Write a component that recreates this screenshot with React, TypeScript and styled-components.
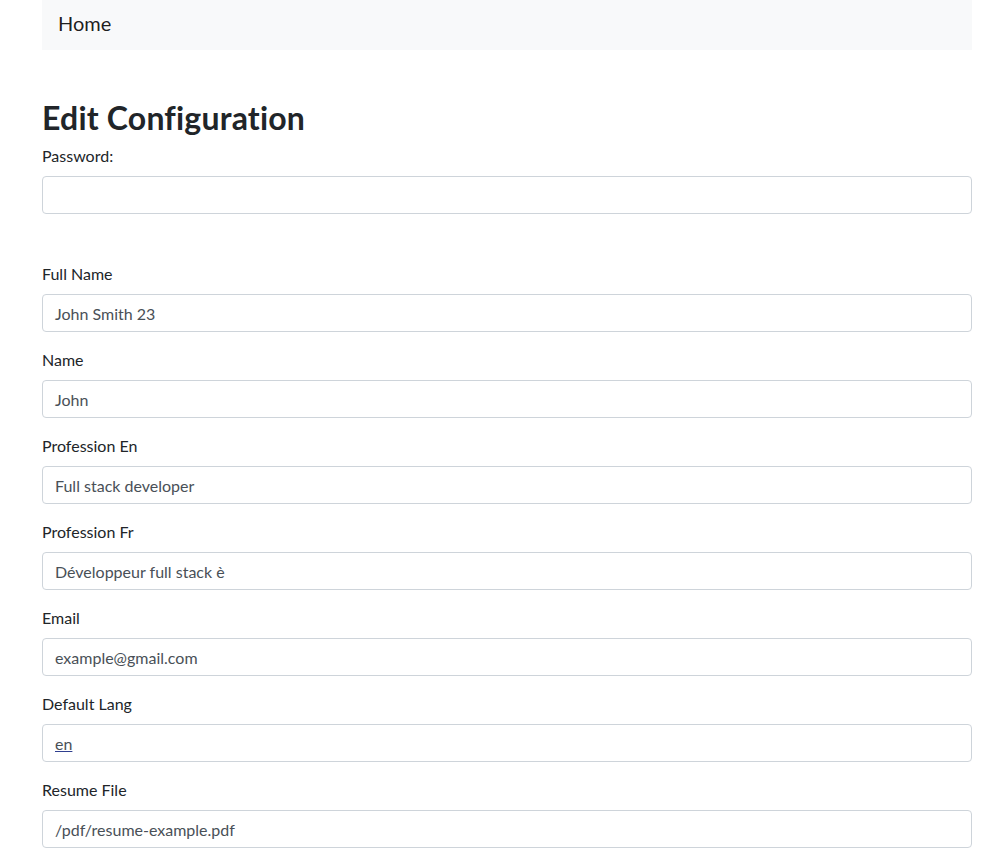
import React from 'react';
import styled, {createGlobalStyle} from 'styled-components';

const GlobalStyle = createGlobalStyle`
  body {
    margin: 0;
    background: #fff;
    color: #212529;
    font-family: "Segoe UI", Lato, "Liberation Sans", sans-serif;
    font-size: 16px;
    line-height: 1.5;
  }
  * {
    box-sizing: border-box;
  }
`;

const Container = styled.div`
  width: 930px;
  margin-left: 42px;
`;

const Navbar = styled.nav`
  display: flex;
  align-items: center;
  height: 50px;
  padding: 0 16px 5px;
  background: #f8f9fa;
`;

const Brand = styled.a`
  font-size: 20px;
  color: rgba(0, 0, 0, 0.9);
  text-decoration: none;
`;

const Title = styled.h2`
  margin: 48px 0 8px;
  padding-top: 1px;
  height: 38px;
  font-size: 32px;
  font-weight: 700;
  line-height: 1.2;
  letter-spacing: 0.2px;
`;

const Group = styled.div<{$spaced?: boolean}>`
  margin-bottom: ${p => (p.$spaced ? '48px' : '16px')};
`;

const Label = styled.label`
  display: block;
  margin-bottom: 8px;
`;

const Input = styled.div<{$link?: boolean}>`
  height: 38px;
  padding: 7px 12px 5px;
  border: 1px solid #ced4da;
  border-radius: 4px;
  color: #495057;
  line-height: 24px;

  span {
    text-decoration: ${p => (p.$link ? 'underline' : 'none')};
    text-decoration-color: #2f3f8f;
  }
`;

const fields = [
  {label: 'Full Name', value: 'John Smith 23'},
  {label: 'Name', value: 'John'},
  {label: 'Profession En', value: 'Full stack developer'},
  {label: 'Profession Fr', value: 'Développeur full stack è'},
  {label: 'Email', value: 'example@gmail.com'},
  {label: 'Default Lang', value: 'en', link: true},
  {label: 'Resume File', value: '/pdf/resume-example.pdf'},
];

const App: React.FC = () => {
  return (
    <>
      <GlobalStyle/>
      <Container>
        <Navbar>
          <Brand href="#">Home</Brand>
        </Navbar>
        <Title>Edit Configuration</Title>
        <Group $spaced>
          <Label>Password:</Label>
          <Input/>
        </Group>
        {fields.map(f => (
          <Group key={f.label}>
            <Label>{f.label}</Label>
            <Input $link={f.link}><span>{f.value}</span></Input>
          </Group>
        ))}
      </Container>
    </>
  );
};

export default App;
